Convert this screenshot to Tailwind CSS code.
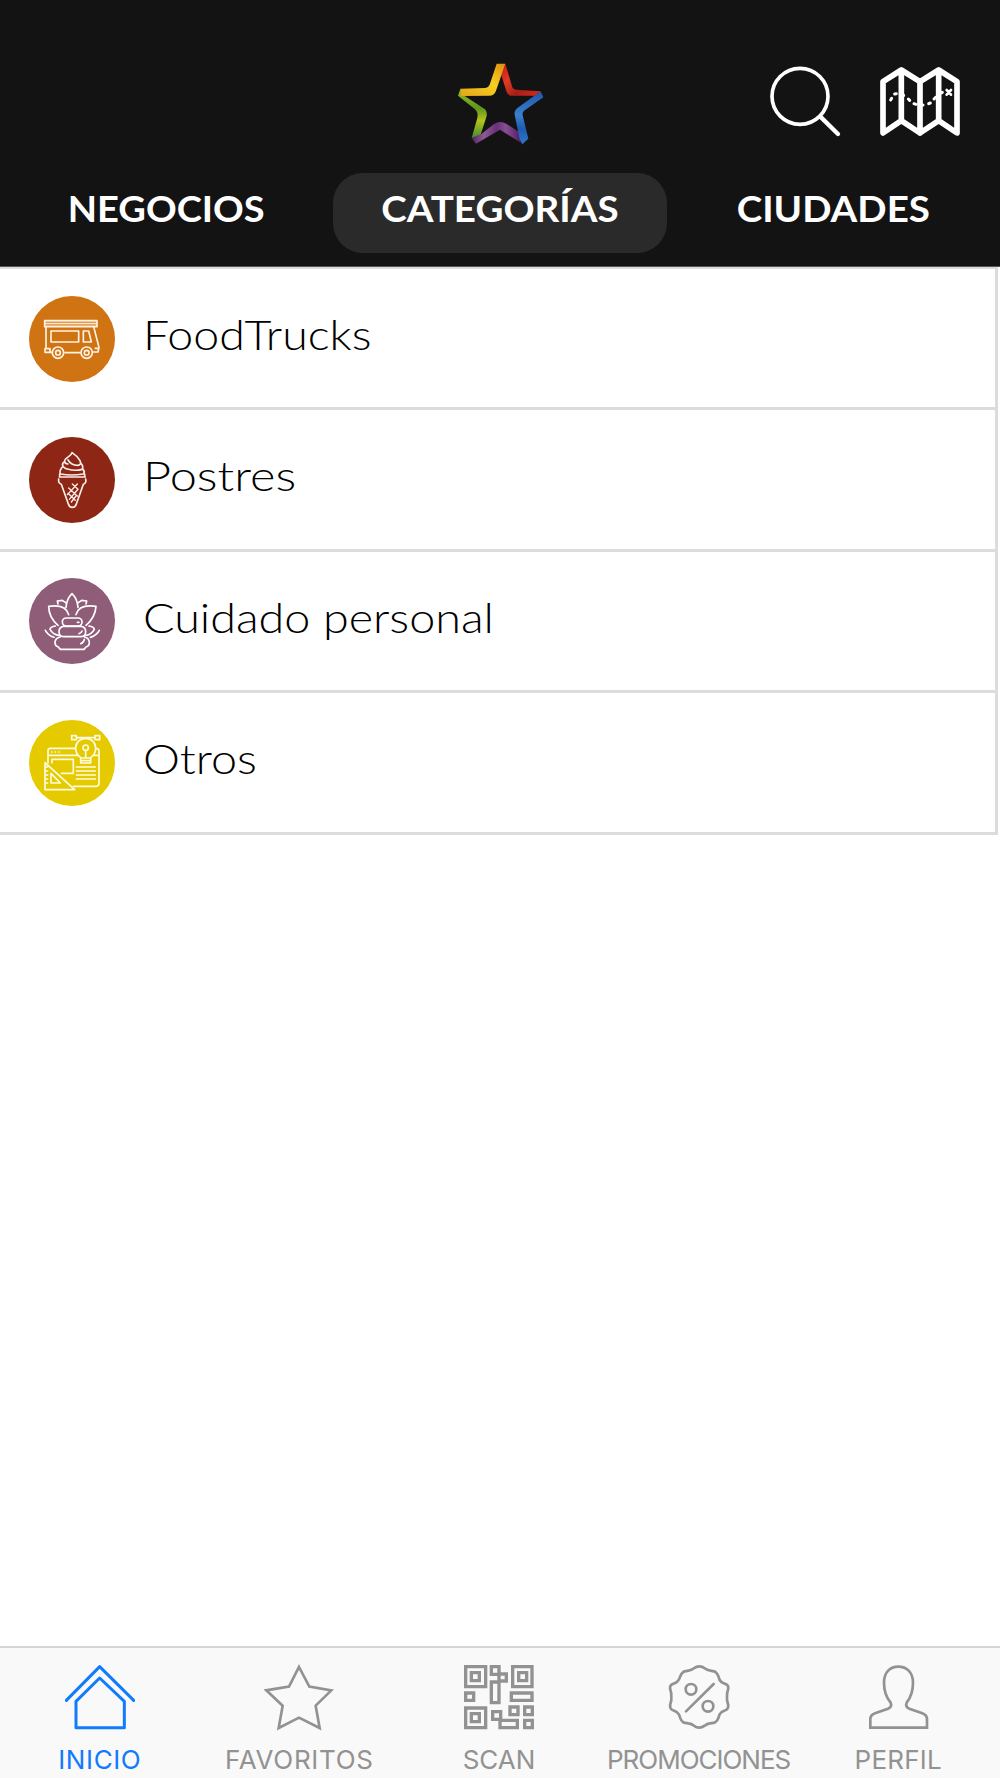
<!DOCTYPE html>
<html lang="es">
<head>
<meta charset="utf-8">
<title>Categorías</title>
<script src="https://cdn.jsdelivr.net/npm/@tailwindcss/browser@4"></script>
</head>
<body class="bg-white">
<div class="w-[1000px] h-[1778px] flex flex-col overflow-hidden bg-white">
  <header class="h-[267px] shrink-0 bg-[#131313] border-b border-[#555] flex flex-col">
    <div class="h-[173px] grid grid-cols-3 pt-[50px]">
      <div></div>
      <div class="flex justify-center">
        <svg class="w-[120px] h-[110px]" viewBox="0 0 360 330">
          <defs>
            <linearGradient id="ye" x1="0" y1="1" x2="1" y2="0"><stop offset="0" stop-color="#e5a51c"/><stop offset=".55" stop-color="#f6cf1d"/><stop offset="1" stop-color="#e08c10"/></linearGradient>
            <linearGradient id="re" x1="0" y1="0" x2="1" y2="1"><stop offset="0" stop-color="#c8181b"/><stop offset=".35" stop-color="#e03a24"/><stop offset=".65" stop-color="#a81f18"/><stop offset="1" stop-color="#d92b1e"/></linearGradient>
            <linearGradient id="bl" x1="0" y1="0" x2="0" y2="1"><stop offset="0" stop-color="#1f55a8"/><stop offset=".45" stop-color="#3b80cf"/><stop offset=".7" stop-color="#1d5cb0"/><stop offset="1" stop-color="#3277c6"/></linearGradient>
            <linearGradient id="pu" x1="0" y1="0" x2="1" y2="0"><stop offset="0" stop-color="#54206a"/><stop offset=".25" stop-color="#8f5a92"/><stop offset=".5" stop-color="#6a2f7d"/><stop offset=".7" stop-color="#86508f"/><stop offset="1" stop-color="#4f1b66"/></linearGradient>
            <linearGradient id="gr" x1="0" y1="0" x2="0" y2="1"><stop offset="0" stop-color="#9fc31c"/><stop offset=".4" stop-color="#5f941f"/><stop offset=".65" stop-color="#b5c41a"/><stop offset="1" stop-color="#3e8a33"/></linearGradient>
          </defs>
          <path fill="url(#gr)" d="M62 115L54 137L104 177Q116 187 112 204L95 264L122 254L140 198Q142 184 134 177L66 133Z"/>
          <path fill="url(#pu)" d="M95 264L108 281L180 239L242 278L240 248L200 222Q181 210 162 222L124 252Z"/>
          <path fill="url(#bl)" d="M302 124L310 142L252 182Q246 188 248 196L265 266L247 283L239 268L224 194Q222 182 232 174Z"/>
          <path fill="url(#re)" d="M196 41L217 112Q220 119 228 119L302 124L284 137L212 137Q203 135 200 126L184 76Z"/>
          <path fill="url(#ye)" d="M170 41H196L168 122Q163 137 148 137L64 138L62 116L136 114Q146 112 149 104Z"/>
        </svg>
      </div>
      <div class="flex justify-end">
        <svg class="w-[230px] h-[100px] mr-5" viewBox="0 0 690 300" fill="none" stroke="#fff" stroke-linecap="round" stroke-linejoin="round">
          <circle cx="150" cy="139" r="84" stroke-width="11"/>
          <path stroke-width="13" d="M211 200L264 252"/>
          <path stroke-width="17" d="M399 95L454 60L510 95L566 60L621 95V249L566 212L510 249L454 212L399 249ZM454 60V212M510 95V249M566 60V212"/>
          <path stroke-width="9" d="M422 150L425 145M434 132L439 131M458 133L461 136M475 147L479 151M492 161L498 163M512 165L519 165M536 161L541 159M552 147L557 142M571 130L577 127"/>
          <path stroke-width="8" d="M590 120L603 134M603 120L590 134"/>
        </svg>
      </div>
    </div>
    <nav class="grid grid-cols-3 h-20 font-[Lato,sans-serif] font-bold text-[36px] text-white">
      <div class="flex justify-center leading-[70px]"><span class="scale-x-[1.057]">NEGOCIOS</span></div>
      <div class="flex justify-center leading-[70px] bg-[#2a2a2a] rounded-[30px]"><span class="scale-x-[1.07]">CATEGORÍAS</span></div>
      <div class="flex justify-center leading-[70px]"><span class="scale-x-[1.07]">CIUDADES</span></div>
    </nav>
  </header>

  <main class="w-[998px] border-r-[3px] border-t-2 border-[#dcdcdc] font-[Lato,sans-serif] font-light text-[42px] text-black">
    <div class="h-[141px] border-b-[3px] border-[#dcdcdc] flex items-center pt-px pl-[29px] gap-7">
      <svg class="w-[86px] h-[86px]" viewBox="87 45 258 258" fill="none" stroke="#fff3e4" stroke-width="5" stroke-linejoin="round">
        <circle cx="216" cy="174" r="129" fill="#d07312" stroke="none"/>
        <path fill="#e39c50" d="M134 119H291V137H134Z"/><path stroke-width="3" d="M134 128H291"/>
        <path d="M138 137V203M281 137L297 199L294 213H278M138 203H150V214H135V203H138M193 215H242M158 214H150M284 202H296"/>
        <path d="M153 150H236V183H153ZM250 150H266L274 183H250Z"/>
        <circle cx="174" cy="215" r="17"/><circle cx="174" cy="215" r="7"/><circle cx="260" cy="215" r="17"/><circle cx="260" cy="215" r="7"/>
      </svg>
      <span class="pb-2 origin-left scale-x-[1.107]">FoodTrucks</span>
    </div>
    <div class="h-[142px] border-b-[3px] border-[#dcdcdc] flex items-center pl-[29px] gap-7">
      <svg class="w-[86px] h-[86px]" viewBox="87 51 258 258" fill="none" stroke="#fbeeea" stroke-width="5" stroke-linejoin="round" stroke-linecap="round">
        <circle cx="216" cy="180" r="129" fill="#8d2614" stroke="none"/>
        <path d="M216 98C214 110 194 112 194 124Q194 132 204 132M216 98Q232 108 240 122Q246 136 232 136Q214 136 204 120M194 124C182 132 188 144 202 147Q226 154 246 148Q252 140 243 130M186 142Q176 156 182 162Q214 168 250 162Q256 156 249 148M179 162V170M254 162V170M178 171H256M176 177Q174 189 184 193L205 252Q208 262 217 262Q226 262 229 252L250 193Q260 189 257 177"/>
        <path stroke-width="4" d="M217 192L234 208M232 192L202 224M206 204L232 228M232 210L208 238M204 220L226 241M228 228L214 246"/>
      </svg>
      <span class="pb-2 origin-left scale-x-[1.16]">Postres</span>
    </div>
    <div class="h-[141px] border-b-[3px] border-[#dcdcdc] flex items-center pl-[29px] gap-7">
      <svg class="w-[86px] h-[86px]" viewBox="87 54 258 258" fill="none" stroke="#fff" stroke-width="5" stroke-linejoin="round" stroke-linecap="round">
        <circle cx="216" cy="183" r="129" fill="#8f5d77" stroke="none"/>
        <path d="M198 142Q200 116 216 101Q232 116 234 142M174 132L172 123L187 121L197 128M258 132L260 123L245 121L235 128M174 196Q146 172 146 139Q198 132 206 164M258 196Q286 172 288 139Q236 132 228 164"/>
        <rect x="187" y="174" width="59" height="24" rx="12"/><path d="M190 199Q177 201 177 215Q177 229 190 230H244Q257 229 257 215Q257 201 244 199M180 231Q165 235 165 248Q165 258 175 261L181 268H252L258 261Q268 258 268 248Q268 235 254 231M190 199H244"/>
        <path d="M232 187H237M246 213Q244 220 237 221M253 238Q252 247 242 251M166 198Q151 200 150 208Q158 223 176 226M267 198Q282 200 283 208Q275 223 258 226M136 211Q144 226 162 232M298 211Q290 226 271 232"/>
      </svg>
      <span class="pb-2 origin-left scale-x-[1.112]">Cuidado personal</span>
    </div>
    <div class="h-[142px] border-b-[3px] border-[#dcdcdc] flex items-center pl-[29px] gap-7">
      <svg class="w-[86px] h-[86px]" viewBox="87 59 258 258" fill="none" stroke="#fffbe0" stroke-width="5" stroke-linejoin="round" stroke-linecap="round">
        <circle cx="216" cy="188" r="129" fill="#e5ca00" stroke="none"/>
        <path d="M225 144H151Q144 144 144 151V188M144 165H232M287 144Q297 144 297 151V249Q297 258 288 258H220M282 165H297M155 155H156M166 155H167M177 155H178"/>
        <path d="M156 187V177H220V219H184M229 200H286M229 212H286M229 224H286M229 236H286"/>
        <path d="M135 187V268H224ZM153 219V248H181ZM136 200H143M136 212H143M136 224H143M136 236H143M136 248H143"/>
        <path fill="#e5ca00" d="M242 188V172Q227 162 227 143Q229 115 257 114Q285 115 287 143Q287 162 272 172V188Z"/>
        <path d="M242 173H272M243 181H271M257 151V172M229 112H285M215 106H229V118H215ZM285 106H299V118H285Z"/><circle cx="257" cy="142" r="8"/>
      </svg>
      <span class="pb-2 origin-left scale-x-[1.112]">Otros</span>
    </div>
  </main>
  <div class="flex-1"></div>

  <footer class="h-[132px] shrink-0 bg-[#f9f9f9] border-t-2 border-[#d4d4d4] grid grid-cols-5 pr-[2px] font-[Inter,sans-serif] text-[26px] leading-8 text-[#929292]">
    <div class="flex flex-col items-center pt-4 gap-3 text-[#117bfd]">
      <svg class="w-[70px] h-[68px]" viewBox="195 74 210 204" fill="none" stroke="currentColor" stroke-width="9" stroke-linejoin="round" stroke-linecap="round"><path d="M199 183L299 82L401 183M228 186L299 116L373 186V265H228Z"/></svg>
      <span class="tracking-[0.6px]">INICIO</span>
    </div>
    <div class="flex flex-col items-center pt-4 gap-3">
      <svg class="w-[70px] h-[68px]" viewBox="792 74 210 204" fill="none" stroke="currentColor" stroke-width="8"><path d="M897 83L928 142L994 153L947 199L959 266L897 235L836 266L848 199L799 153L867 142Z"/></svg>
      <span class="tracking-[0.7px]">FAVORITOS</span>
    </div>
    <div class="flex flex-col items-center pt-4 gap-3">
      <svg class="w-[70px] h-[68px]" viewBox="191 74 210 204" fill="none" stroke="currentColor" stroke-width="10"><path d="M196 82H256V142H196ZM213 100H237V124H213ZM337 82H395V142H337ZM355 100H379V124H355ZM196 206H256V265H196ZM213 223H237V247H213ZM196 161H220V183H196ZM333 161H395V183H333ZM273 82H296V105H273ZM296 104H318V125H296ZM273 128H296V190H273ZM277 217H301V240H277ZM299 243H351V265H299ZM329 203H353V226H329ZM373 203H396V226H373ZM373 243H396V265H373Z"/></svg>
      <span>SCAN</span>
    </div>
    <div class="flex flex-col items-center pt-4 gap-3">
      <svg class="w-[70px] h-[68px]" viewBox="194 74 210 204" fill="none" stroke="currentColor" stroke-width="8" stroke-linejoin="round" stroke-linecap="round"><path d="M300 81Q309 81 316 87Q323 93 333 94L347 97Q355 103 358 113Q359 122 367 129L383 136Q389 143 386 151Q382 161 383 173Q382 184 386 194Q389 204 382 211L367 218Q359 224 358 234Q355 244 346 250L332 252Q323 253 316 259Q308 265 300 265Q291 265 284 259Q277 253 267 252L253 250Q245 244 242 234Q240 224 232 218L217 211Q210 204 213 194Q217 184 216 173Q217 161 213 151Q210 143 216 136L232 129Q240 122 242 113Q245 103 253 97L267 94Q277 93 284 87Q291 81 300 81ZM343 134L260 216"/><circle cx="275" cy="150" r="16"/><circle cx="326" cy="201" r="16"/></svg>
      <span class="tracking-[-1px]">PROMOCIONES</span>
    </div>
    <div class="flex flex-col items-center pt-4 gap-3">
      <svg class="w-[70px] h-[68px]" viewBox="792 74 210 204" fill="none" stroke="currentColor" stroke-width="8"><path d="M814 265V238Q815 227 828 222L867 208Q880 202 875 190C860 172 855 152 855 130C855 98 874 82 898 82C922 82 942 98 942 130C942 152 937 172 923 190Q918 202 931 208L970 222Q983 227 984 238V265Z"/></svg>
      <span class="tracking-[0.2px]">PERFIL</span>
    </div>
  </footer>
</div>
</body>
</html>
